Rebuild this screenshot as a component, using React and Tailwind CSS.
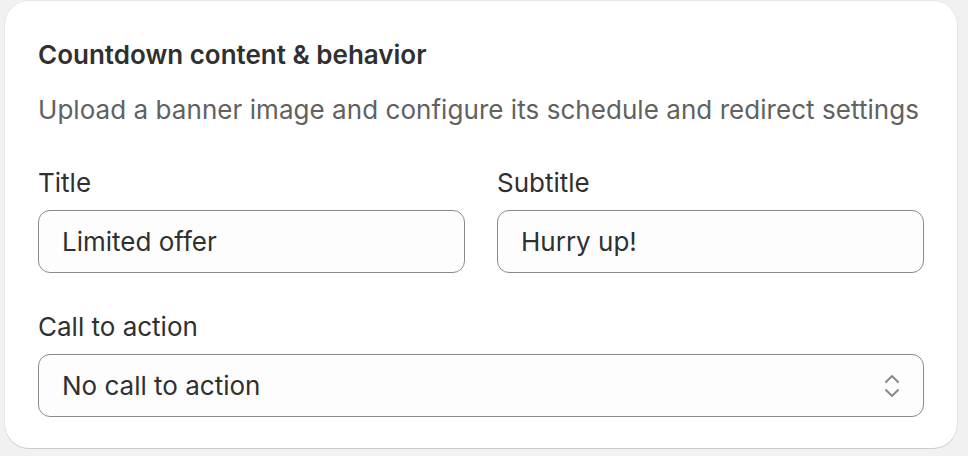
import React from 'react';

const Field = ({ label, value }) => (
  <div className="flex flex-col gap-[11px]">
    <label className="text-[26px] leading-[32px] text-[#303030]">{label}</label>
    <div className="h-[63px] flex items-center rounded-xl border border-[#8a8a8a] bg-[#fdfdfd] px-[23px] text-[26px] text-[#303030]">
      {value}
    </div>
  </div>
);

export default function App() {
  return (
    <div className="min-h-screen bg-[#f1f1f1] pl-[5px] pt-[1px]" style={{ fontFamily: 'Inter, "Noto Sans", sans-serif' }}>
      <div className="w-[952px] rounded-[24px] bg-white px-[33px] pt-[38px] pb-[31px] shadow-[0_1px_0_0_rgba(0,0,0,0.12),0_0_0_1px_rgba(0,0,0,0.04)]">
        <h2 className="text-[26px] leading-[32px] font-semibold text-[#303030]">Countdown content &amp; behavior</h2>
        <p className="mt-[23px] text-[26px] leading-[32px] tracking-[0.05px] text-[#616161]">
          Upload a banner image and configure its schedule and redirect settings
        </p>

        <div className="mt-[41px] grid grid-cols-2 gap-8">
          <Field label="Title" value="Limited offer" />
          <Field label="Subtitle" value="Hurry up!" />
        </div>

        <div className="mt-[38px] flex flex-col gap-[11px]">
          <label className="text-[26px] leading-[32px] text-[#303030]">Call to action</label>
          <div className="h-[63px] flex items-center justify-between rounded-xl border border-[#8a8a8a] bg-[#fdfdfd] pl-[23px] pr-[23px] text-[26px] text-[#303030]">
            <span>No call to action</span>
            <svg width="16" height="24" viewBox="0 0 16 24" fill="none" stroke="#8a8a8a" strokeWidth="2" strokeLinecap="round" strokeLinejoin="round">
              <path d="M2 8l6-6 6 6" />
              <path d="M2 16l6 6 6-6" />
            </svg>
          </div>
        </div>
      </div>
    </div>
  );
}
